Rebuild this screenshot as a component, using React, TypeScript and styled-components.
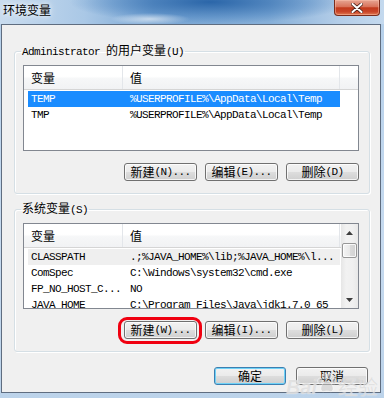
import styled, { createGlobalStyle } from "styled-components";

const GlobalStyle = createGlobalStyle`
    html, body {
        margin: 0;
        padding: 0;
    }
    body {
        width: 384px;
        height: 398px;
        overflow: hidden;
        font-family: "Noto Sans CJK SC", "Noto Sans", sans-serif;
        font-size: 12px;
        color: #000;
    }
`;

const Frame = styled.div`
    position: relative;
    width: 384px;
    height: 398px;
    display: flex;
    flex-direction: column;
    overflow: hidden;
    background: linear-gradient(to bottom, #b4cfea, #c6daef 60%, #bcd3ea);
`;

const TitleBar = styled.div`
    display: flex;
    align-items: flex-start;
    height: 24px;
    flex-shrink: 0;
    background:
        radial-gradient(ellipse 40px 6px at 150px 19px, rgba(255, 255, 255, 0.6), rgba(255, 255, 255, 0)),
        radial-gradient(ellipse 140px 22px at 210px 2px, rgba(38, 98, 166, 0.95), rgba(60, 120, 185, 0.4) 70%, rgba(60, 120, 185, 0)),
        linear-gradient(90deg, #c9dcef 0%, #aac8e6 22%, #7ba7d4 40%, #86afd8 70%, #b3cde8 88%, #c4d9ee 100%);
`;

const Title = styled.div`
    padding: 3px 0 0 3px;
    line-height: 14px;
    font-size: 12px;
    color: #000;
    text-shadow: 0 0 4px rgba(255, 255, 255, 0.9), 0 0 8px rgba(255, 255, 255, 0.7);
`;

const CloseButton = styled.div`
    margin-left: auto;
    margin-right: 4px;
    width: 46px;
    height: 16px;
    box-sizing: border-box;
    display: flex;
    align-items: center;
    justify-content: center;
    border: 1px solid #7a2c1c;
    border-top: none;
    border-radius: 0 0 4px 4px;
    background: linear-gradient(#e6a593 0%, #d9735a 45%, #c23a1c 52%, #c94529 78%, #e07a52 100%);
    box-shadow: inset 0 0 0 1px rgba(255, 200, 180, 0.45);
`;

const Body = styled.div`
    flex: 1;
    margin: 0 3px 5px 1px;
    padding: 0 10px 0 12px;
    border: 1px solid #5f6d80;
    background: #f0f0f0;
    display: flex;
    flex-direction: column;
`;

const Group = styled.fieldset<{ $top: number }>`
    margin: ${(p) => p.$top}px 0 0 0;
    padding: 6px 10px 12px 8px;
    border: 1px solid #d5dfe5;
    border-radius: 3px;
    box-shadow: inset 1px 1px 0 #fff, 1px 1px 0 #fff;
    min-width: 0;
`;

const Legend = styled.legend`
    margin-left: -2px;
    padding: 0 1px;
    line-height: 14px;
    font-size: 12px;
`;

const Latin = styled.span`
    font-family: "Liberation Mono", monospace;
    font-size: 11px;
    letter-spacing: -0.6px;
`;

const ListView = styled.div`
    height: 86px;
    box-sizing: border-box;
    border: 1px solid #828790;
    background: #fff;
    display: flex;
    overflow: hidden;
`;

const ListContent = styled.div`
    flex: 1;
    min-width: 0;
    display: flex;
    flex-direction: column;
`;

const Header = styled.div`
    display: flex;
    height: 24px;
    flex-shrink: 0;
    box-sizing: border-box;
    border-bottom: 1px solid #d5d5d5;
    background: linear-gradient(#ffffff 0%, #ffffff 45%, #f6f7f8 55%, #f1f2f4 100%);
`;

const HeaderCell = styled.div<{ $width?: number }>`
    ${(p) => (p.$width ? `width: ${p.$width}px;` : "flex: 1;")}
    flex-shrink: 0;
    box-sizing: border-box;
    padding-left: 7px;
    display: flex;
    align-items: center;
    border-right: ${(p) => (p.$width ? "1px solid #e3e6ea" : "none")};
    font-size: 12px;
`;

const Rows = styled.div`
    padding-top: 1px;
`;

const Row = styled.div<{ $state?: "active" | "inactive" }>`
    display: flex;
    align-items: center;
    height: 16px;
    width: 312px;
    margin-left: 4px;
    font-family: "Liberation Mono", monospace;
    font-size: 11px;
    letter-spacing: -0.6px;
    color: ${(p) => (p.$state === "active" ? "#fff" : "#000")};
    background: ${(p) =>
        p.$state === "active" ? "#1a8cff" : p.$state === "inactive" ? "#efefef" : "transparent"};
`;

const Cell = styled.div<{ $width: number; $pad: number }>`
    width: ${(p) => p.$width}px;
    flex-shrink: 0;
    box-sizing: border-box;
    padding-left: ${(p) => p.$pad}px;
    white-space: nowrap;
    overflow: hidden;
`;

const ScrollBar = styled.div`
    width: 17px;
    flex-shrink: 0;
    display: flex;
    flex-direction: column;
    background: linear-gradient(90deg, #e6e6e6, #f2f2f2 30%, #f0f0f0 70%, #e8e8e8);
`;

const ScrollArrow = styled.div`
    height: 17px;
    display: flex;
    align-items: center;
    justify-content: center;
`;

const ScrollThumb = styled.div`
    height: 15px;
    margin: 2px 1px 0 1px;
    box-sizing: border-box;
    border: 1px solid #979797;
    border-radius: 2px;
    background: linear-gradient(90deg, #f4f4f4, #e9e9e9 50%, #dadada 55%, #d2d2d2);
    box-shadow: inset 0 0 0 1px rgba(255, 255, 255, 0.8);
`;

const ScrollTrack = styled.div`
    flex: 1;
`;

const ButtonRow = styled.div<{ $gap: number }>`
    display: flex;
    justify-content: flex-end;
    gap: ${(p) => p.$gap}px;
    margin-top: 12px;
`;

const Button = styled.button<{ $width?: number; $default?: boolean }>`
    width: ${(p) => p.$width ?? 73}px;
    height: 18px;
    box-sizing: border-box;
    padding: 0;
    margin: 0;
    display: flex;
    align-items: center;
    justify-content: center;
    font-family: "Noto Sans CJK SC", sans-serif;
    font-size: 12px;
    line-height: 16px;
    color: #000;
    border: 1px solid ${(p) => (p.$default ? "#3c7fb1" : "#707070")};
    border-radius: 3px;
    background: linear-gradient(#f2f2f2 0%, #ebebeb 48%, #dddddd 52%, #cfcfcf 100%);
    box-shadow: inset 0 0 0 1px ${(p) => (p.$default ? "#6fd2f7" : "rgba(255, 255, 255, 0.75)")};
`;

const Highlight = styled.span`
    position: relative;
    display: inline-flex;

    &::after {
        content: "";
        position: absolute;
        top: -4px;
        bottom: -5px;
        left: -6px;
        right: -5px;
        border: 3px solid #f00010;
        border-radius: 9px;
        pointer-events: none;
    }
`;

const Footer = styled.div`
    display: flex;
    justify-content: flex-end;
    gap: 10px;
    margin-top: 15px;
    padding-right: 2px;
`;

const Watermark = styled.div`
    position: absolute;
    right: 6px;
    bottom: 0;
    display: flex;
    align-items: flex-end;
    font-size: 20px;
    line-height: 22px;
    color: rgba(200, 200, 200, 0.5);
    text-shadow: 0 0 1px rgba(255, 255, 255, 0.8);
    pointer-events: none;
`;

const WatermarkLatin = styled.span`
    font-family: "Liberation Sans", sans-serif;
    font-weight: bold;
    font-style: italic;
`;

const Arrow = ({ down }: { down?: boolean }) => (
    <svg width="7" height="4" viewBox="0 0 7 4">
        <polygon points={down ? "0,0 7,0 3.5,4" : "3.5,0 7,4 0,4"} fill="#3d3d3d" />
    </svg>
);

const Paw = () => (
    <svg width="20" height="22" viewBox="0 0 20 22" style={{ margin: "0 1px 4px 0" }}>
        <g fill="rgba(200,200,200,0.55)" stroke="rgba(255,255,255,0.7)" strokeWidth="0.8">
            <ellipse cx="3" cy="9" rx="2.3" ry="3" />
            <ellipse cx="7.5" cy="4" rx="2.3" ry="3" />
            <ellipse cx="12.5" cy="4" rx="2.3" ry="3" />
            <ellipse cx="17" cy="9" rx="2.3" ry="3" />
            <path d="M10 9 C6 9 3 15 4 18 C5 21 8 19 10 19 C12 19 15 21 16 18 C17 15 14 9 10 9 Z" />
        </g>
    </svg>
);

type Variable = { name: string; value: string; state?: "active" | "inactive" };

const userVars: Variable[] = [
    { name: "TEMP", value: "%USERPROFILE%\\AppData\\Local\\Temp", state: "active" },
    { name: "TMP", value: "%USERPROFILE%\\AppData\\Local\\Temp" },
];

const systemVars: Variable[] = [
    { name: "CLASSPATH", value: ".;%JAVA_HOME%\\lib;%JAVA_HOME%\\l...", state: "inactive" },
    { name: "ComSpec", value: "C:\\Windows\\system32\\cmd.exe" },
    { name: "FP_NO_HOST_C...", value: "NO" },
    { name: "JAVA_HOME", value: "C:\\Program Files\\Java\\jdk1.7.0_65" },
];

const VariableList = ({ items, scroll }: { items: Variable[]; scroll?: boolean }) => (
    <ListView>
        <ListContent>
            <Header>
                <HeaderCell $width={99}>变量</HeaderCell>
                <HeaderCell $width={217}>值</HeaderCell>
                <HeaderCell />
            </Header>
            <Rows>
                {items.map((v) => (
                    <Row key={v.name} $state={v.state}>
                        <Cell $width={95} $pad={3}>{v.name}</Cell>
                        <Cell $width={217} $pad={7}>{v.value}</Cell>
                    </Row>
                ))}
            </Rows>
        </ListContent>
        {scroll && (
            <ScrollBar>
                <ScrollArrow><Arrow /></ScrollArrow>
                <ScrollThumb />
                <ScrollTrack />
                <ScrollArrow><Arrow down /></ScrollArrow>
            </ScrollBar>
        )}
    </ListView>
);

const App = () => {
    return (
        <>
            <GlobalStyle />
            <Frame>
                <TitleBar>
                    <Title>环境变量</Title>
                    <CloseButton>
                        <svg width="12" height="10" viewBox="0 0 12 10">
                            <path
                                d="M1.5 1 L10.5 9 M10.5 1 L1.5 9"
                                stroke="#4a2018"
                                strokeWidth="3.6"
                                strokeLinecap="round"
                            />
                            <path
                                d="M1.5 1 L10.5 9 M10.5 1 L1.5 9"
                                stroke="#ffffff"
                                strokeWidth="2"
                                strokeLinecap="round"
                            />
                        </svg>
                    </CloseButton>
                </TitleBar>
                <Body>
                    <Group $top={18}>
                        <Legend>
                            <Latin>Administrator </Latin>的用户变量<Latin>(U)</Latin>
                        </Legend>
                        <VariableList items={userVars} />
                        <ButtonRow $gap={8}>
                            <Button>新建<Latin>(N)...</Latin></Button>
                            <Button>编辑<Latin>(E)...</Latin></Button>
                            <Button>删除<Latin>(D)</Latin></Button>
                        </ButtonRow>
                    </Group>
                    <Group $top={7}>
                        <Legend>
                            系统变量<Latin>(S)</Latin>
                        </Legend>
                        <VariableList items={systemVars} scroll />
                        <ButtonRow $gap={8}>
                            <Highlight>
                                <Button>新建<Latin>(W)...</Latin></Button>
                            </Highlight>
                            <Button>编辑<Latin>(I)...</Latin></Button>
                            <Button>删除<Latin>(L)</Latin></Button>
                        </ButtonRow>
                    </Group>
                    <Footer>
                        <Button $width={72} $default>确定</Button>
                        <Button $width={72}>取消</Button>
                    </Footer>
                </Body>
                <Watermark>
                    <WatermarkLatin>Bai</WatermarkLatin>
                    <Paw />
                    <span>经验</span>
                </Watermark>
            </Frame>
        </>
    );
};

export default App;
